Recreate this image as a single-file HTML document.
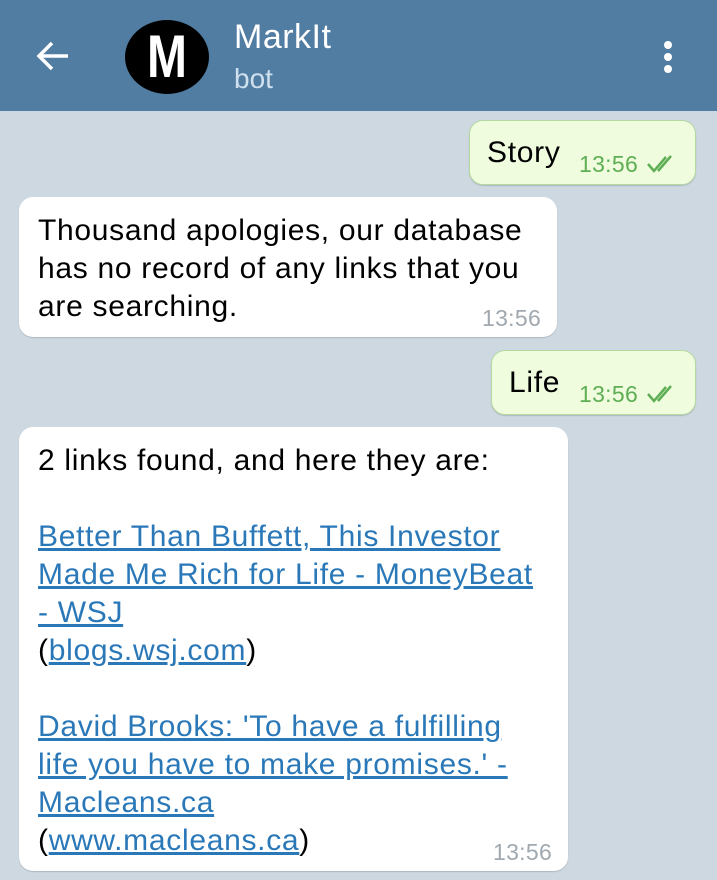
<!DOCTYPE html><html><head><meta charset="utf-8"><style>
body{margin:0;width:717px;height:880px;overflow:hidden;background:#cdd8e1;font-family:"Liberation Sans",sans-serif;position:relative}
.hd{position:absolute;left:0;top:0;width:717px;height:111px;background:#527da3}
.av{position:absolute;left:125px;top:20px;width:84px;height:74px;border-radius:50%;background:#000;color:#fff;font-weight:bold;font-size:60px;text-align:center;line-height:74px}
.b{position:absolute;border-radius:14px;font-size:30px;letter-spacing:0.7px;color:#000;box-shadow:0 1px 1px rgba(0,0,0,.15)}
.o{background:#effdde;border:1px solid #b5d9a0}
.i{background:#fff}
.t{position:absolute;font-size:23px;letter-spacing:0.3px;color:#a0a8b0}
.g{color:#5fae55}
a{color:#2a78b8;text-decoration:underline}
.tx{position:absolute;left:19px;top:15px;line-height:38px}
</style></head><body>
<div class="hd">
<svg style="position:absolute;left:36px;top:40px" width="34" height="32" viewBox="0 0 34 32"><path d="M32 16H4M16 3L3 16l13 13" stroke="#fff" stroke-width="3.5" fill="none"/></svg>
<div class="av"><span style="display:inline-block;transform:scaleX(.8)">M</span></div>
<div style="position:absolute;left:234px;top:18px;color:#fff;font-size:34px;letter-spacing:0.5px">MarkIt</div>
<div style="position:absolute;left:234px;top:63px;color:#cfe0ee;font-size:28px">bot</div>
<div style="position:absolute;left:664px;top:41px;width:8px;height:8px;border-radius:50%;background:#fff;box-shadow:0 12px 0 #fff,0 24px 0 #fff"></div>
</div>
<div class="b o" style="left:469px;top:120px;width:225px;height:63px"><span style="position:absolute;left:17px;top:15px">Story</span><span class="t g" style="left:109px;top:30px">13:56</span><svg style="position:absolute;left:176px;top:34px" width="34" height="18" viewBox="0 0 34 18"><path d="M2 9l6 7L20 2M12 16L25 1" stroke="#5fae55" stroke-width="2.5" fill="none"/></svg></div>
<div class="b i" style="left:19px;top:197px;width:538px;height:140px"><div class="tx">Thousand apologies, our database<br>has no record of any links that you<br>are searching.</div><span class="t" style="left:463px;top:108px">13:56</span></div>
<div class="b o" style="left:491px;top:350px;width:203px;height:63px"><span style="position:absolute;left:17px;top:15px">Life</span><span class="t g" style="left:87px;top:30px">13:56</span><svg style="position:absolute;left:154px;top:34px" width="34" height="18" viewBox="0 0 34 18"><path d="M2 9l6 7L20 2M12 16L25 1" stroke="#5fae55" stroke-width="2.5" fill="none"/></svg></div>
<div class="b i" style="left:19px;top:427px;width:549px;height:444px"><div class="tx">2 links found, and here they are:<br><br><a>Better Than Buffett, This Investor<br>Made Me Rich for Life - MoneyBeat<br>- WSJ</a><br>(<a>blogs.wsj.com</a>)<br><br><a>David Brooks: 'To have a fulfilling<br>life you have to make promises.' -<br>Macleans.ca</a><br>(<a>www.macleans.ca</a>)</div><span class="t" style="left:474px;top:412px">13:56</span></div>
</body></html>
